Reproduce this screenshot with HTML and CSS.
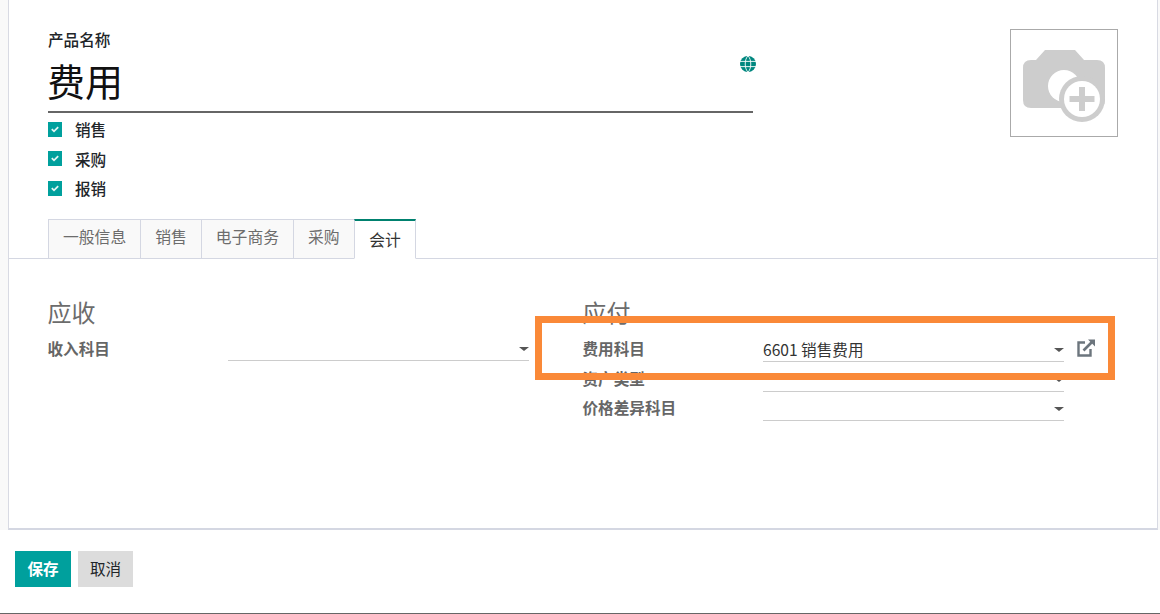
FILE: index.html
```html
<!DOCTYPE html>
<html lang="zh">
<head>
<meta charset="utf-8">
<title>产品</title>
<link rel="stylesheet" href="styles.css">
</head>
<body>
<div class="page">
  <main class="sheet">
    <header class="head">
      <div class="head-main">
        <div class="name-label">产品名称</div>
        <div class="name-row">
          <span class="name-value">费用</span>
          <svg class="globe" viewBox="0 0 16 16" width="16" height="16" aria-hidden="true">
            <circle cx="8" cy="8" r="8" fill="#00877f"/>
            <path d="M0 5.400H16M0 10.600H16" stroke="#fff" stroke-width=".9" fill="none"/>
            <path d="M8 0C4.300 3 4.300 13 8 16M8 0C11.700 3 11.700 13 8 16" stroke="#fff" stroke-width=".9" fill="none"/>
          </svg>
        </div>
        <label class="check"><span class="box"><svg viewBox="0 0 14 14" width="14" height="14"><path d="M3.800 7.200L6 9.300L10.200 5.200" stroke="#e4f4f3" stroke-width="1.800" fill="none"/></svg></span>销售</label>
        <label class="check"><span class="box"><svg viewBox="0 0 14 14" width="14" height="14"><path d="M3.800 7.200L6 9.300L10.200 5.200" stroke="#e4f4f3" stroke-width="1.800" fill="none"/></svg></span>采购</label>
        <label class="check"><span class="box"><svg viewBox="0 0 14 14" width="14" height="14"><path d="M3.800 7.200L6 9.300L10.200 5.200" stroke="#e4f4f3" stroke-width="1.800" fill="none"/></svg></span>报销</label>
      </div>
      <div class="photo">
        <svg viewBox="0 0 82 72" width="82" height="72" aria-hidden="true">
          <path fill="#cdcdcd" d="M22 0H52L61 10H74Q82 10 82 18V50Q82 58 74 58H8Q0 58 0 50V18Q0 10 8 10H13Z"/>
          <circle cx="41" cy="36" r="16" fill="#fff"/>
          <circle cx="59" cy="49" r="23" fill="#cdcdcd"/>
          <circle cx="59" cy="49" r="18" fill="#fff"/>
          <path d="M59 37V61M46.500 49H71.500" stroke="#cdcdcd" stroke-width="6" fill="none"/>
        </svg>
      </div>
    </header>

    <nav class="tabs">
      <span class="tab">一般信息</span>
      <span class="tab">销售</span>
      <span class="tab">电子商务</span>
      <span class="tab">采购</span>
      <span class="tab tab-active">会计</span>
    </nav>

    <section class="groups">
      <div class="group group-left">
        <h2 class="group-title">应收</h2>
        <div class="row">
          <span class="row-label">收入科目</span>
          <span class="field"><span class="caret"></span></span>
        </div>
      </div>
      <div class="group group-right">
        <h2 class="group-title">应付</h2>
        <div class="row">
          <span class="row-label">费用科目</span>
          <span class="field">6601 销售费用<span class="caret"></span></span>
          <svg class="ext" viewBox="0 0 18 18" width="18" height="18" aria-hidden="true">
            <path d="M8 3.500H1.500V16.500H13.500V10" stroke="#6c757d" stroke-width="2.400" fill="none"/>
            <path d="M6.500 11.500L15 3" stroke="#6c757d" stroke-width="2.600" fill="none"/>
            <path d="M11 0.500H18V7.500Z" fill="#6c757d"/>
          </svg>
        </div>
        <div class="row">
          <span class="row-label">资产类型</span>
          <span class="field"><span class="caret"></span></span>
        </div>
        <div class="row">
          <span class="row-label">价格差异科目</span>
          <span class="field"><span class="caret"></span></span>
        </div>
      </div>
    </section>
    <div class="highlight"></div>
  </main>

  <footer class="actions">
    <button class="btn btn-save">保存</button>
    <button class="btn btn-cancel">取消</button>
  </footer>
</div>
</body>
</html>
```
FILE: styles.css
```css
* { box-sizing: border-box; }
html, body { margin: 0; padding: 0; background: #fff; }
body {
  font-family: "Noto Sans CJK SC", "Noto Sans", sans-serif;
  font-size: 15.6px;
  color: #212529;
  overflow: hidden;
}
.page {
  width: 1160px;
  height: 614px;
  display: flex;
  flex-direction: column;
  background: #fff;
  border-bottom: 1px solid #666;
}
.sheet {
  position: relative;
  height: 530px;
  flex: none;
  margin: 0 2px 0 8px;
  border-left: 1px solid #d8dae3;
  border-right: 1px solid #d8dae3;
  border-bottom: 2px solid #d4d7e2;
  box-shadow: -8px 0 0 #f9f9f9, 2px 0 0 #f9f9f9;
}
.head {
  display: flex;
  justify-content: space-between;
  align-items: flex-start;
  height: 219px;
  padding: 29px 39px 0 39px;
}
.head-main { width: 705px; }
.name-label {
  height: 22px;
  line-height: 20px;
  font-weight: 500;
  color: #212529;
}
.name-row {
  display: flex;
  justify-content: space-between;
  align-items: flex-start;
  height: 62px;
  border-bottom: 2px solid #666;
  margin-bottom: 2px;
}
.name-value {
  font-size: 38px;
  line-height: 58px;
  margin-left: -1px;
  color: #111;
}
.globe { margin: 5px -3px 0 0; }
.check {
  display: flex;
  align-items: center;
  height: 29.500px;
  font-weight: 500;
  line-height: 20px;
  padding-bottom: 1px;
}
.box {
  display: block;
  width: 14px;
  height: 15px;
  margin-right: 13px;
  background: #00a09d;
}
.box svg { display: block; }
.photo {
  width: 108px;
  height: 108px;
  border: 1px solid #aaa;
  padding: 20px 0 0 12px;
}
.photo svg { display: block; }
.tabs {
  display: flex;
  height: 40px;
  padding-left: 39px;
  border-bottom: 1px solid #d4d7e2;
}
.tab {
  height: 39px;
  padding: 0 14px;
  font-size: 15.800px;
  line-height: 34px;
  color: #6c6c6c;
  background: #f9f9f9;
  border: 1px solid #d4d7e2;
  border-bottom: none;
  margin-right: -1px;
}
.tab-active {
  height: 40px;
  padding-top: 1px;
  margin-left: 0.600px;
  background: #fff;
  color: #333;
  border-top: 2px solid #00816f;
  border-bottom: 1px solid #fff;
  margin-right: 0;
  line-height: 35px;
}
.groups {
  display: flex;
  padding: 35px 0 0 38.500px;
}
.group-left { width: 535px; }
.group-right { width: 530px; }
.group-title {
  margin: 0;
  height: 40px;
  font-size: 24px;
  font-weight: 400;
  line-height: 36px;
  color: #6c6c6c;
}
.row {
  display: flex;
  align-items: flex-start;
  height: 29.500px;
}
.row-label {
  width: 180.500px;
  height: 29px;
  line-height: 28px;
  font-weight: 700;
  color: #666;
}
.field {
  position: relative;
  display: block;
  width: 301px;
  height: 28px;
  padding-top: 1px;
  line-height: 29px;
  color: #333;
  border-bottom: 1px solid #ccc;
}
.group-left .field { margin-top: -1px; }
.caret {
  position: absolute;
  right: 0;
  top: 14px;
  border-top: 4px solid #555;
  border-left: 5px solid transparent;
  border-right: 5px solid transparent;
}
.ext { margin: 5px 0 0 12.500px; }
.highlight {
  position: absolute;
  left: 526px;
  top: 316px;
  width: 580px;
  height: 64px;
  border: 7px solid #fa8938;
}
.actions {
  display: flex;
  gap: 7px;
  padding: 21px 0 0 15px;
}
.btn {
  height: 36px;
  padding: 0 0 3px;
  border: none;
  font-family: inherit;
  font-size: 15.600px;
  line-height: 30px;
}
.btn-save {
  width: 56px;
  background: #00a09d;
  color: #fff;
  font-weight: 700;
}
.btn-cancel {
  width: 55px;
  background: #dcdcdc;
  color: #212529;
}
```
